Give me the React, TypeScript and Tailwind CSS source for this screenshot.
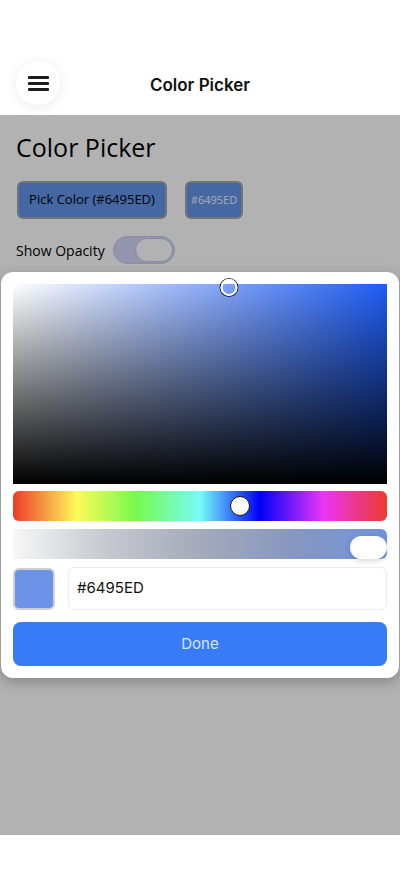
import React from "react";

const HEX = "#6495ED";

function MenuButton() {
  return (
    <button className="flex h-[44px] w-[44px] items-center justify-center rounded-full bg-white shadow-[0_2px_14px_rgba(0,0,0,0.08)]">
      <span className="flex w-[21px] flex-col gap-[3px]">
        <span className="h-[3px] w-full rounded-[1px] bg-[#1c1c1c]" />
        <span className="h-[3px] w-full rounded-[1px] bg-[#1c1c1c]" />
        <span className="h-[3px] w-full rounded-[1px] bg-[#1c1c1c]" />
      </span>
    </button>
  );
}

function PickerPanel() {
  return (
    <div className="flex flex-col rounded-[12px] bg-white p-[12px] shadow-[0_4px_14px_rgba(0,0,0,0.25)]">
      {/* saturation / value square */}
      <div className="relative h-[200px] w-full">
        <div className="absolute inset-0 bg-[#1f5cf5]" />
        <div className="absolute inset-0 bg-gradient-to-r from-white to-transparent" />
        <div className="absolute inset-0 bg-gradient-to-b from-transparent to-black" />
        <div className="absolute left-[216px] top-[-5px] h-[17px] w-[17px] -translate-x-1/2 rounded-full border-[2.5px] border-white shadow-[0_0_0_1px_rgba(0,0,0,0.8)]" />
      </div>

      {/* hue slider */}
      <div className="relative mt-[7px] h-[30px] w-full rounded-[6px] bg-[linear-gradient(to_right,#ee3a2a_0%,#fdfb5a_17%,#77fa4d_33%,#76fbfa_50%,#0000f5_66%,#ea35f7_83%,#ee3a2a_100%)]">
        <div className="absolute left-[227px] top-1/2 h-[20px] w-[20px] -translate-x-1/2 -translate-y-1/2 rounded-full border-[1.5px] border-[#111] bg-white" />
      </div>

      {/* alpha slider */}
      <div className="relative mt-[8px] h-[30px] w-full rounded-r-[6px] bg-[linear-gradient(to_right,#f7f7f7_0%,#c6c8ce_25%,#a4aaba_50%,#8697c0_75%,#7093dc_100%)]">
        <div className="absolute bottom-0 right-0 h-[23px] w-[37px] rounded-full bg-white shadow-[0_2px_6px_rgba(0,0,0,0.15)]" />
      </div>

      {/* swatch + hex input */}
      <div className="mt-[8px] flex items-center gap-[13px]">
        <div className="h-[42px] w-[42px] shrink-0 rounded-[6px] border-2 border-[#cfcfcf] bg-[#6d93e8]" />
        <div className="flex h-[43px] flex-1 items-center rounded-[6px] border border-[#ececec] px-[8px] text-[15px] text-[#111] [font-family:Inter,'Liberation_Sans',sans-serif]">
          {HEX}
        </div>
      </div>

      {/* confirm */}
      <button className="mt-[12px] flex h-[44px] w-full items-center justify-center rounded-[8px] bg-[#387bf6] text-[15px] text-[#dbe6fd] [font-family:Inter,'Liberation_Sans',sans-serif]">
        Done
      </button>
    </div>
  );
}

export default function App() {
  return (
    <div className="relative flex h-[869px] w-[400px] flex-col overflow-hidden bg-white">
      {/* top bar */}
      <header className="relative flex h-[115px] shrink-0 items-start bg-white">
        <div className="flex w-full items-start px-[16px] pt-[61px]">
          <MenuButton />
          <div className="flex flex-1 justify-center pr-[44px] pt-[12px] text-[17px] font-semibold text-[#111] [font-family:Inter,'Liberation_Sans',sans-serif]">
            Color Picker
          </div>
        </div>
      </header>

      {/* screen body */}
      <main className="relative flex-1 bg-white [font-family:'Open_Sans','Noto_Sans',sans-serif]">
        <div className="flex flex-col px-[16px] pt-[15px]">
          <h1 className="text-[25px] leading-[34px] text-black">Color Picker</h1>
          <div className="mt-[17px] flex items-center gap-[18px] pl-[1px]">
            <button className="h-[38px] w-[150px] rounded-[6px] border-2 border-[#a6a6a6] bg-[#6495ED] text-[13px] text-black">
              Pick Color ({HEX})
            </button>
            <button className="h-[38px] w-[58px] rounded-[6px] border-2 border-[#a6a6a6] bg-[#6495ED] text-[11px] text-[#eef2fc]">
              {HEX}
            </button>
          </div>
          <div className="mt-[17px] flex items-center gap-[8px]">
            <span className="text-[14px] text-black">Show Opacity</span>
            <span className="relative flex h-[28px] w-[62px] items-center rounded-full border border-[#c9c9f2] bg-[#d4d4f7]">
              <span className="absolute right-[1px] h-[24px] w-[38px] rounded-full border border-[#c4c4ea] bg-white" />
            </span>
          </div>
        </div>

        {/* dimmed backdrop with the picker popover on top */}
        <div className="absolute inset-0 bg-black/30">
          <div className="absolute left-[1px] right-[1px] top-[157px]">
            <PickerPanel />
          </div>
        </div>
      </main>

      <footer className="h-[34px] shrink-0 bg-white" />
    </div>
  );
}
